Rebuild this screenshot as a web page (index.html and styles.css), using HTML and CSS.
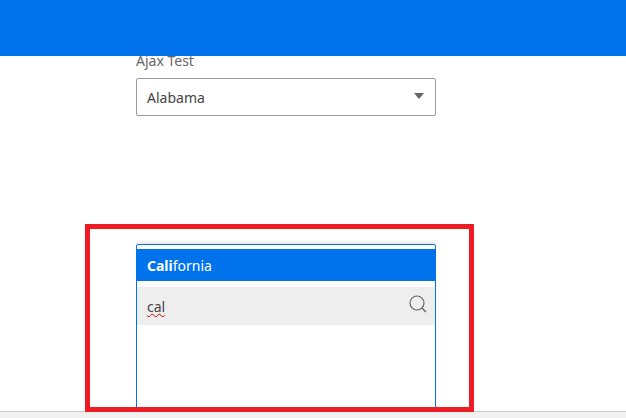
FILE: index.html
```html
<!DOCTYPE html>
<html>
	<head>
		<meta charset="UTF-8">
		<title>Ajax Test</title>
		<link rel="stylesheet" href="styles.css">
	</head>
	<body>
		<div class="topbar"></div>
		<div class="content">
			<div class="label">Ajax Test</div>
			<div class="select">
				<span>Alabama</span>
				<i class="caret"></i>
			</div>
			<div class="panel">
				<div class="option"><b>Cali</b>fornia</div>
				<div class="search">
					<span class="typed">cal</span>
					<svg class="search-icon" width="20" height="20" viewBox="0 0 20 20">
						<circle cx="8" cy="9" r="7" fill="none" stroke="#666" stroke-width="1.2"/>
						<path d="M13 14L17 18" fill="none" stroke="#666" stroke-width="1.4"/>
					</svg>
				</div>
			</div>
		</div>
		<div class="statusbar"></div>
		<div class="marker"></div>
	</body>
</html>
```

FILE: styles.css
```css
html,body{
	height: 100%;
}
body{
	margin: 0;
	overflow: hidden;
	position: relative;
	background-color: #fff;
	font-family: "Noto Sans", "Open Sans", sans-serif;
	font-size: 14px;
	color: #444;
}
.topbar{
	height: 56px;
	background-color: #0073ec;
	position: relative;
	z-index: 1;
}
.content{
	width: 300px;
	height: 355px;
	margin-left: 136px;
	overflow: hidden;
}
.label{
	margin-top: -5px;
	height: 27px;
	line-height: 19px;
	color: #666;
}
.select{
	height: 36px;
	border: 1px solid #999;
	border-radius: 2px;
	display: flex;
	align-items: center;
	justify-content: space-between;
	padding: 0 11px 0 10px;
}
.caret{
	width: 0;
	height: 0;
	border-left: 5px solid transparent;
	border-right: 5px solid transparent;
	border-top: 6px solid #666;
	margin-top: -3px;
}
.panel{
	margin-top: 128px;
	height: 180px;
	border: 1px solid #0073ec;
	border-radius: 2px;
	padding-top: 4px;
	box-shadow: 0 0 6px rgba(0,0,0,.2);
}
.option{
	height: 32px;
	line-height: 34px;
	padding: 0 10px;
	background-color: #0073ec;
	color: #fff;
}
.search{
	margin-top: 6px;
	height: 38px;
	background-color: #eee;
	display: flex;
	align-items: center;
	justify-content: space-between;
	padding: 0 6px 0 10px;
}
.typed{
	text-decoration: underline wavy #e00000 1px;
	text-underline-offset: 1px;
}
.search-icon{
	margin-top: -4px;
}
.statusbar{
	height: 6px;
	background-color: #f1f1f1;
	border-top: 1px solid #ccc;
}
.marker{
	position: absolute;
	left: 85px;
	top: 224px;
	width: 379px;
	height: 178px;
	border: 5px solid #ed1c24;
}
```
